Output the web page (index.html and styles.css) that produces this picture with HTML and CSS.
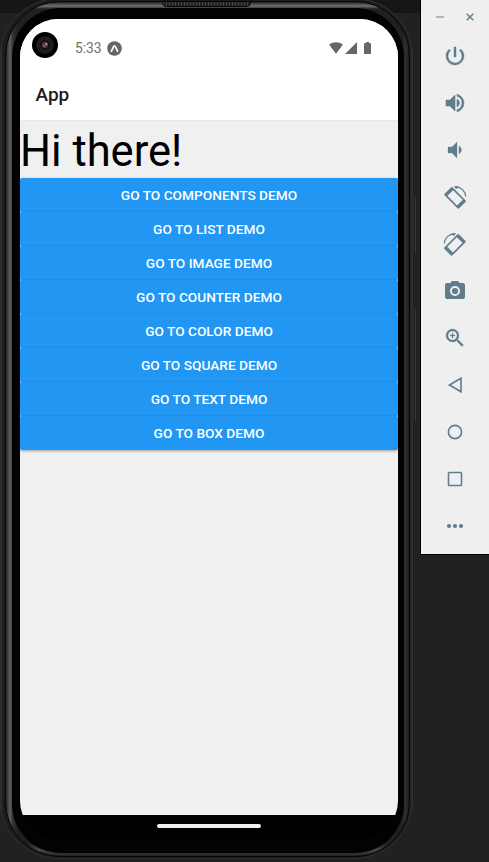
FILE: index.html
```html
<!DOCTYPE html>
<html lang="en">
<head>
<meta charset="utf-8">
<title>App</title>
<link rel="stylesheet" href="styles.css">
</head>
<body>
<main class="desk">
  <section class="phone">
    <i class="speaker"></i><i class="key key-power"></i><i class="key key-volume"></i>
    <div class="rim"><div class="bezel"><div class="screen">
      <header class="top">
        <div class="status">
          <svg class="lens" viewBox="0 0 26 26"><circle cx="13" cy="13" r="13"/><circle cx="13" cy="13" r="9" fill="#1d1d1d"/><circle cx="13" cy="13" r="5" fill="#171312"/><circle cx="13" cy="13" r="3" fill="#51403b"/><circle cx="14.3" cy="12" r="1.1" fill="#b8a096"/><circle cx="12" cy="14" r="1" fill="#8b6256"/></svg>
          <span class="time">5:33</span>
          <svg class="expo" viewBox="0 0 15 15"><circle cx="7.5" cy="7.5" r="7.3" fill="#666"/><path d="M4.4 10.1C5.6 8.7 6.2 4.8 7.5 4.8s1.9 3.9 3.1 5.3" fill="none" stroke="#fff" stroke-width="1.8" stroke-linecap="round"/></svg>
          <svg class="signals" viewBox="0 0 43 12"><path d="M0 2.5Q7-2.2 14 2.5L7 11.7zM16 12 28 0v12zM35 1.3h2V0h3v1.3h2V12h-7z" fill="#666"/></svg>
        </div>
        <h1 class="title">App</h1>
      </header>
      <div class="content">
        <p class="greeting">Hi there!</p>
        <nav class="actions">
          <button>GO TO COMPONENTS DEMO</button>
          <button>GO TO LIST DEMO</button>
          <button>GO TO IMAGE DEMO</button>
          <button>GO TO COUNTER DEMO</button>
          <button>GO TO COLOR DEMO</button>
          <button>GO TO SQUARE DEMO</button>
          <button>GO TO TEXT DEMO</button>
          <button>GO TO BOX DEMO</button>
        </nav>
      </div>
      <footer class="home"><i class="pill"></i></footer>
    </div></div></div>
  </section>
  <aside class="tools">
    <div class="window">
      <svg viewBox="0 0 10 10"><path d="M1 5h8" stroke="#9aabb3" stroke-width="1.6"/></svg>
      <svg viewBox="0 0 10 10"><path d="m1.7 1.7 6.6 6.6m0-6.6L1.7 8.3" stroke="#607d8b" stroke-width="1.4"/></svg>
    </div>
    <svg class="tool" viewBox="0 0 24 24"><path d="M13 3h-2v10h2zm4.83 2.17-1.42 1.42A6.92 6.92 0 0 1 19 12a7 7 0 1 1-11.42-5.42L6.17 5.17A8.93 8.93 0 0 0 3 12a9 9 0 0 0 18 0c0-2.74-1.23-5.18-3.17-6.83z" stroke="#607d8b" stroke-width=".5"/></svg>
    <svg class="tool" viewBox="0 0 24 24"><path d="M3 9v6h4l5 5V4L7 9zm13.5 3A4.5 4.5 0 0 0 14 7.97v8.05A4.5 4.5 0 0 0 16.5 12zM14 3.23v2.06a7 7 0 0 1 0 13.42v2.06a9 9 0 0 0 0-17.54z" stroke="#607d8b" stroke-width=".6"/></svg>
    <svg class="tool" viewBox="0 0 24 24"><path d="M18.5 12A4.5 4.5 0 0 0 16 7.97v8.05A4.5 4.5 0 0 0 18.5 12zM5 9v6h4l5 5V4L9 9z" stroke="#607d8b" stroke-width=".3"/></svg>
    <svg class="tool" viewBox="0 0 24 24"><g transform="translate(.1 .8) rotate(45 12 12)"><path fill-rule="evenodd" d="M3 6.3h18a1.3 1.3 0 0 1 1.3 1.3v8.8a1.3 1.3 0 0 1-1.3 1.3H3a1.3 1.3 0 0 1-1.3-1.3V7.6A1.3 1.3 0 0 1 3 6.3zM5.2 8v8h13.6V8z"/></g><path d="M12.5 1.8C18 1.8 22.5 6 22.7 11.5" fill="none" stroke="#607d8b" stroke-width="1.2"/><path d="m11 1 5 .6-3 2.6z"/></svg>
    <svg class="tool" viewBox="0 0 24 24"><g transform="matrix(-1 0 0 1 24 0)"><g transform="translate(.1 .8) rotate(45 12 12)"><path fill-rule="evenodd" d="M3 6.3h18a1.3 1.3 0 0 1 1.3 1.3v8.8a1.3 1.3 0 0 1-1.3 1.3H3a1.3 1.3 0 0 1-1.3-1.3V7.6A1.3 1.3 0 0 1 3 6.3zM5.2 8v8h13.6V8z"/></g><path d="M12.5 1.8C18 1.8 22.5 6 22.7 11.5" fill="none" stroke="#607d8b" stroke-width="1.2"/><path d="m11 1 5 .6-3 2.6z"/></g></svg>
    <svg class="tool" viewBox="0 0 24 24"><path fill-rule="evenodd" d="m9 2-1.8 2H4a2 2 0 0 0-2 2v12a2 2 0 0 0 2 2h16a2 2 0 0 0 2-2V6a2 2 0 0 0-2-2h-3.2L15 2zm3 15a5 5 0 1 1 0-10 5 5 0 0 1 0 10z"/><circle cx="12" cy="12" r="3.1"/></svg>
    <svg class="tool" viewBox="0 0 24 24"><path d="M15.5 14h-.79l-.28-.27A6.47 6.47 0 0 0 16 9.5 6.5 6.5 0 1 0 9.5 16c1.61 0 3.09-.59 4.23-1.57l.27.28v.79l5 4.99L20.49 19zm-6 0a4.5 4.5 0 1 1 0-9 4.5 4.5 0 0 1 0 9zm.4-7H9v2H7v1h2v2h1v-2h2V9h-2z" stroke="#607d8b" stroke-width=".3"/></svg>
    <svg class="tool line" viewBox="0 0 24 24"><path d="M18 5.2v13.6L6.4 12z"/></svg>
    <svg class="tool line" viewBox="0 0 24 24"><circle cx="12" cy="12" r="6.6"/></svg>
    <svg class="tool line" viewBox="0 0 24 24"><rect x="5.5" y="5.5" width="13" height="13" rx=".8"/></svg>
    <svg class="tool" viewBox="0 0 24 24"><circle cx="6" cy="12" r="2.1"/><circle cx="12" cy="12" r="2.1"/><circle cx="18" cy="12" r="2.1"/></svg>
  </aside>
</main>
</body>
</html>
```
FILE: styles.css
```css
* { box-sizing: border-box; }
body { margin: 0; background: #212121; font-family: Roboto, sans-serif; }
.desk {
  display: flex;
  align-items: flex-start;
  height: 862px;
  overflow: hidden;
  background: linear-gradient(#161616 13px, #212121 13px);
}
.phone {
  position: relative;
  width: 413px;
  height: 861px;
  margin-top: -2px;
  padding: 3px 3px 2px 5px;
  border-radius: 59px;
  background: linear-gradient(90deg, #3c3c3c, #1b1b1b 3px, #1b1b1b 408px, #303030);
  box-shadow: inset 0 0 0 1px #303030;
}
.rim {
  height: 100%;
  padding: 6px 5px 3px 6px;
  border-radius: 55px;
  border: 1px solid #080808;
  background:
    linear-gradient(90deg, #242424, #606060 4px, #303030 7px, transparent 12px, transparent 396px, #303030 400px, #1a1a1a) padding-box,
    linear-gradient(#222, #707070 4px, #202020 7px, #202020 842px, #484848 848px, #222) padding-box;
}
.bezel {
  height: 100%;
  padding: 11px 6px 13px 8px;
  border-radius: 49px;
  background: #020202;
}
.screen {
  display: flex;
  flex-direction: column;
  width: 378px;
  height: 820px;
  overflow: hidden;
  border-radius: 38px;
  background: linear-gradient(#f0f0f0 796px, #000 796px);
}
.top {
  flex: none;
  height: 102px;
  background: #fff;
  border-bottom: 1px solid #e8e8e8;
}
.status { display: flex; align-items: center; height: 51px; padding: 0 26px 0 12px; }
.lens { width: 26px; height: 26px; margin-top: 1px; }
.time { margin: 7px 5px 0 17px; font-size: 13.8px; line-height: 16px; color: #707070; }
.expo { width: 15px; height: 15px; margin-top: 7px; }
.signals { width: 43px; height: 12px; margin: 7px 0 0 auto; }
.title { margin: 11px 0 0 15.5px; font-size: 19px; line-height: 28px; font-weight: 500; color: #1c1c1e; }
.content { flex: 1; }
.greeting { margin: 0; height: 57px; padding-top: 6px; font-size: 43.5px; line-height: 50px; color: #000; white-space: nowrap; }
.actions { display: flex; flex-direction: column; }
.actions button {
  height: 34px;
  padding: 0;
  border: 0;
  border-radius: 2px;
  background: #2196f3;
  box-shadow: 0 1px 3px rgba(0, 0, 0, .34);
  color: #fff;
  font: 500 13.7px/16px Roboto, sans-serif;
}
.home { display: flex; justify-content: center; height: 24px; padding-top: 9px; background: #000; }
.pill { width: 104px; height: 4px; border-radius: 2px; background: #f0f0f0; }
.speaker {
  position: absolute;
  left: 162px;
  top: 3px;
  width: 89px;
  height: 6px;
  border: 1px solid #050505;
  border-radius: 2px 2px 5px 5px;
  background: repeating-linear-gradient(90deg, #444 0 1px, #222 1px 3px);
}
.key { position: absolute; right: -3px; width: 1px; background: #363636; }
.key-power { top: 200px; height: 56px; }
.key-volume { top: 312px; height: 112px; }
.tools {
  display: flex;
  flex-direction: column;
  align-items: center;
  gap: 23px;
  width: 69px;
  height: 555px;
  margin-left: 7px;
  border: solid #000;
  border-width: 0 0 1px 1px;
  background: #efefef;
}
.window { display: flex; gap: 20px; height: 21px; padding-top: 12px; }
.window svg { width: 10px; height: 10px; }
.tool { flex: none; width: 24px; height: 24px; fill: #607d8b; }
.line { fill: none; stroke: #607d8b; stroke-width: 1.6; }
```
